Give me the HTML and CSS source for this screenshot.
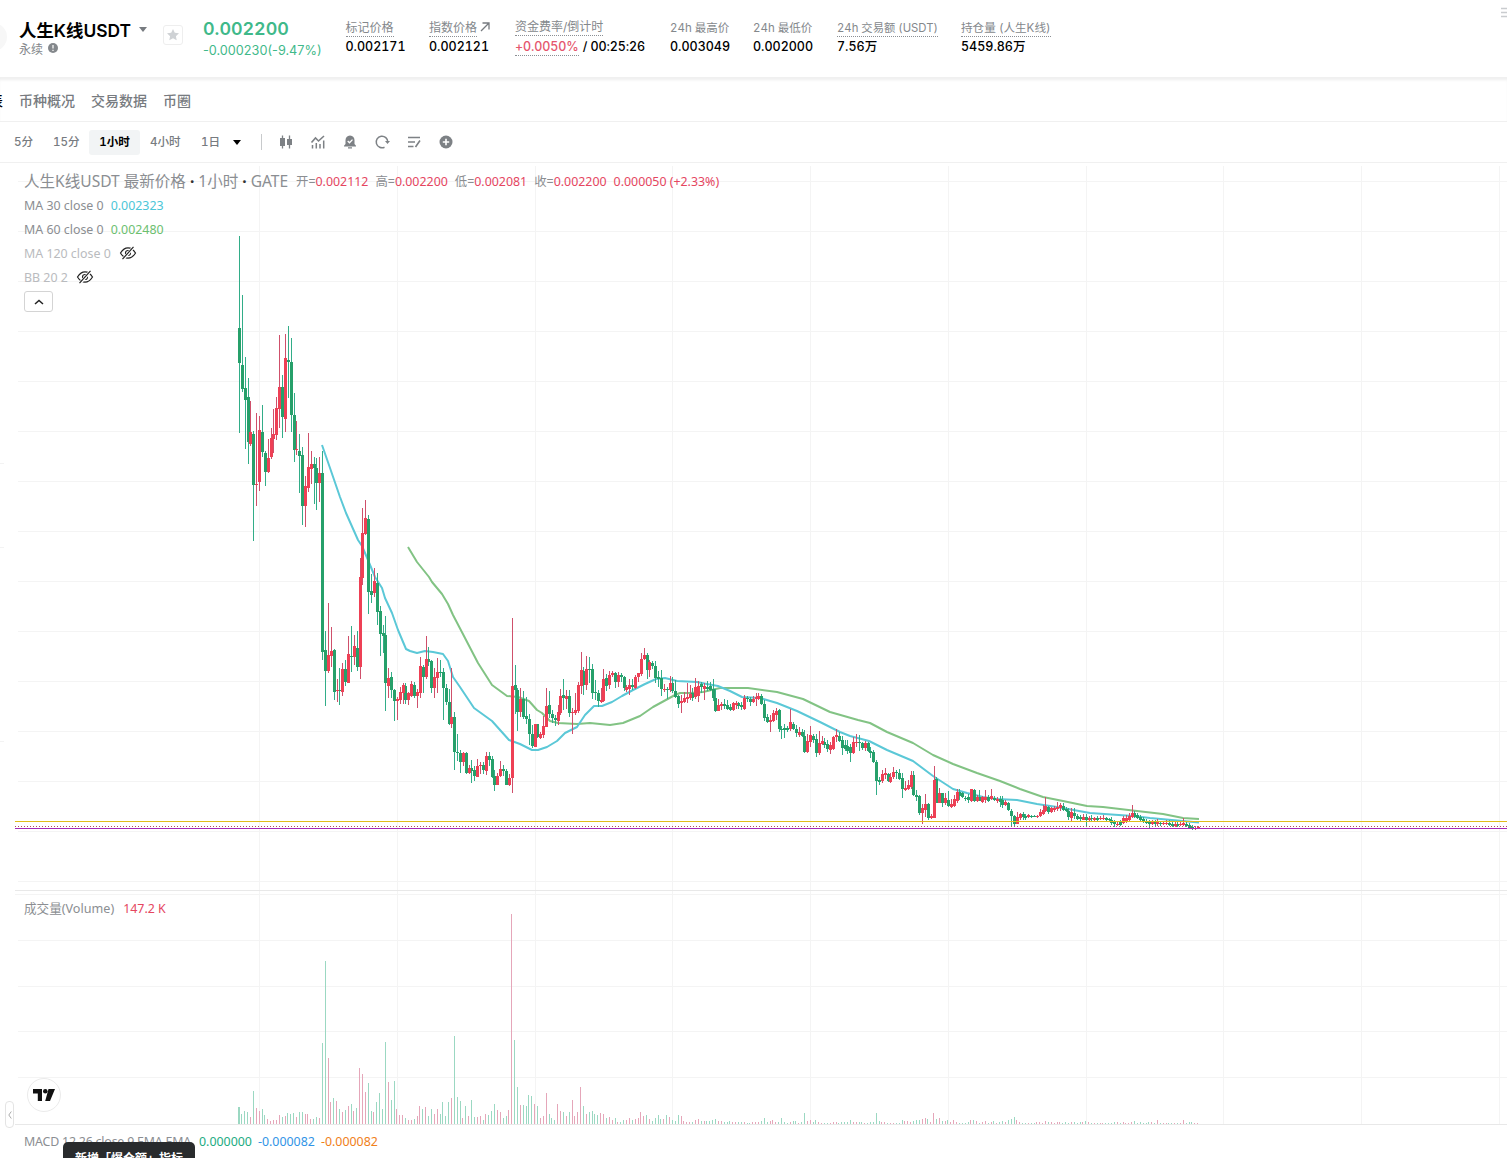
FILE: index.html
```html
<!DOCTYPE html>
<html lang="zh-CN">
<head>
	<meta charset="UTF-8">
	<title>人生K线USDT 永续</title>
	<link rel="stylesheet" href="styles.css">
</head>
<body>
	<div class="header">
		<i class="coin"></i>
		<div class="pair">
			<div class="pair-name">人生K线USDT<i class="caret"></i></div>
			<div class="pair-type">永续
				<svg width="10" height="10" viewBox="0 0 10 10"><circle cx="5" cy="5" r="5" fill="#84888c"/><path d="M5 2v3.6M5 6.8v1.3" stroke="#fff" stroke-width="1.2"/></svg>
			</div>
		</div>
		<div class="star">
			<svg width="14" height="14" viewBox="0 0 14 14"><path d="M7 1l1.8 3.8 4.2.5-3.1 2.9.8 4.1L7 10.3l-3.7 2 .8-4.1L1 5.300l4.200-.5z" fill="#cfd2d5"/></svg>
		</div>
		<div class="price">
			<strong>0.002200</strong>
			<span>-0.000230(-9.47%)</span>
		</div>
		<dl class="stat s1"><dt><u>标记价格</u></dt><dd>0.002171</dd></dl>
		<dl class="stat s2"><dt><u>指数价格</u><svg class="arrow" width="10" height="10" viewBox="0 0 10 10"><path d="M1 9L9 1M2.500 1H9v6.500" fill="none" stroke="#777b80" stroke-width="1.3"/></svg></dt><dd>0.002121</dd></dl>
		<dl class="stat s3"><dt><u>资金费率/倒计时</u></dt><dd><u class="red">+0.0050%</u><span> / 00:25:26</span></dd></dl>
		<dl class="stat s4"><dt>24h 最高价</dt><dd>0.003049</dd></dl>
		<dl class="stat s5"><dt>24h 最低价</dt><dd>0.002000</dd></dl>
		<dl class="stat s6"><dt><u>24h 交易额 (USDT)</u></dt><dd>7.56万</dd></dl>
		<dl class="stat s7"><dt><u>持仓量 (人生K线)</u></dt><dd>5459.86万</dd></dl>
		<svg class="menu" width="6" height="12" viewBox="0 0 6 12"><path d="M0 1.500h6M0 5.500h6M0 9.500h6" stroke="#c9cccf" stroke-width="1.500"/></svg>
	</div>

	<div class="tabs">
		<a class="active">表</a>
		<a>币种概况</a>
		<a>交易数据</a>
		<a>币圈</a>
	</div>

	<div class="toolbar">
		<a class="t1">5分</a>
		<a class="t2">15分</a>
		<a class="t3 active">1小时</a>
		<a class="t4">4小时</a>
		<a class="t5">1日</a>
		<i class="caret black"></i>
		<i class="line"></i>
		<div class="icons">
			<svg width="16" height="16" viewBox="0 0 16 16"><path d="M4.500 1.500v13M11.500 1.500v13" stroke="#7d8185" stroke-width="1.300"/><path d="M2 4h5v8H2zM9 5h5v6H9z" fill="#7d8185"/></svg>
			<svg width="16" height="16" viewBox="0 0 16 16"><path d="M1.500 8.500L5.500 4l3 3L14 2" fill="none" stroke="#7d8185" stroke-width="1.600"/><path d="M2.500 11v3.500M6.300 9v5.500M10 10v4.500M13.700 6.500v8" stroke="#7d8185" stroke-width="1.500"/></svg>
			<svg width="16" height="16" viewBox="0 0 16 16"><path d="M8 1.500c3 0 4.500 2.200 4.500 4.700V10l1.500 1.800v.8H2v-.8L3.500 10V6.200C3.500 3.700 5 1.500 8 1.500zM6 13.300h4v1.300H6z" fill="#7d8185"/><path d="M5.700 7l1.800 1.800 3-3.200" fill="none" stroke="#fff" stroke-width="1.300"/></svg>
			<svg width="16" height="16" viewBox="0 0 16 16"><path d="M10.500 13.200A5.800 5.800 0 1 1 13.800 8" fill="none" stroke="#7d8185" stroke-width="1.500"/><path d="M11 7h5l-2.500 3z" fill="#7d8185"/></svg>
			<svg width="16" height="16" viewBox="0 0 16 16"><path d="M2 3.500h12M2 8h7M2 12.500h5.500M14 6.500l-4.500 6.500" fill="none" stroke="#7d8185" stroke-width="1.600"/></svg>
			<svg width="16" height="16" viewBox="0 0 16 16"><circle cx="8" cy="8" r="6.500" fill="#7d8185"/><path d="M8 4.800v6.400M4.800 8h6.400" stroke="#fff" stroke-width="1.600"/></svg>
		</div>
	</div>

	<div class="chart">
		<svg id="chart" width="1507" height="995" viewBox="0 163 1507 995"></svg>

		<div class="legend">
			<div class="title">
				<span class="name">人生K线USDT 最新价格<b>·</b>1小时<b>·</b>GATE</span>
				<span class="o1">开=<em>0.002112</em></span>
				<span class="o2">高=<em>0.002200</em></span>
				<span class="o3">低=<em>0.002081</em></span>
				<span class="o4">收=<em>0.002200</em></span>
				<em>0.000050 (+2.33%)</em>
			</div>
			<div class="row">MA 30 close 0 <span class="cyan">0.002323</span></div>
			<div class="row">MA 60 close 0 <span class="green">0.002480</span></div>
			<div class="row off">MA 120 close 0
				<svg width="18" height="14" viewBox="0 0 18 14"><path d="M1.500 7C4 3 6.500 1.800 9 1.800S14 3 16.500 7C14 11 11.500 12.200 9 12.200S4 11 1.500 7z" fill="none" stroke="#222" stroke-width="1.200"/><circle cx="9" cy="7" r="2.500" fill="none" stroke="#222" stroke-width="1.200"/><path d="M3.800 13.500L14.800 .8" stroke="#fff" stroke-width="3"/><path d="M3.500 13.200L14.500 .8" stroke="#222" stroke-width="1.200"/></svg>
			</div>
			<div class="row off">BB 20 2
				<svg width="18" height="14" viewBox="0 0 18 14"><path d="M1.500 7C4 3 6.500 1.800 9 1.800S14 3 16.500 7C14 11 11.500 12.200 9 12.200S4 11 1.500 7z" fill="none" stroke="#222" stroke-width="1.200"/><circle cx="9" cy="7" r="2.500" fill="none" stroke="#222" stroke-width="1.200"/><path d="M3.800 13.500L14.800 .8" stroke="#fff" stroke-width="3"/><path d="M3.500 13.200L14.500 .8" stroke="#222" stroke-width="1.200"/></svg>
			</div>
			<div class="fold"><svg width="10" height="6" viewBox="0 0 10 6"><path d="M1 5l4-3.500L9 5" fill="none" stroke="#222" stroke-width="1.500"/></svg></div>
		</div>

		<div class="volume">成交量(Volume)<em>147.2 K</em></div>
		<div class="macd">MACD 12 26 close 9 EMA EMA<span class="m1">0.000000</span><span class="m2">-0.000082</span><span class="m3">-0.000082</span></div>

		<div class="tv"><svg width="22" height="12" viewBox="0 0 22 12"><path d="M0 0h9v12H4.800V4.600H0zM15.500 0H22l-5 12h-4.800z" fill="#111"/><circle cx="12.300" cy="2.300" r="2.300" fill="#111"/></svg></div>
		<div class="handle"><svg width="4" height="8" viewBox="0 0 4 8"><path d="M3.300 .5L.8 4l2.500 3.500" fill="none" stroke="#aaa"/></svg></div>
		<div class="tip">新增「爆仓额」指标</div>
	</div>
	<script src="chart.js"></script>
</body>
</html>
```
FILE: styles.css
```css
body { margin:0;width:1507px;height:1158px;overflow:hidden;background:#fff;color:#000;font-size:12px;font-family:Inter,"Noto Sans CJK SC",sans-serif; }
dl,dd { margin:0; }
i,em { font-style:normal; }
u { text-decoration:none;border-bottom:1px dotted #8b8f94; }

.header { position:relative;display:flex;height:78px;box-sizing:border-box;overflow:hidden;border-bottom:1px solid #f0f0f0;font-variant-numeric:tabular-nums; }
.coin { width:28px;height:28px;margin:23px 12px 0 -21px;border-radius:50%;background:#f7f7f7; }
.pair { width:144px; }
.pair-name { display:flex;align-items:center;height:24px;margin-top:17px;font-size:17.400px;font-weight:600;white-space:nowrap; }
.caret { border:4.500px solid transparent;border-top:5px solid #777b80;border-bottom:0;margin-left:8px; }
.pair-type { display:flex;align-items:center;gap:5px;height:14px;color:#84888c;font-size:12px; }
.star { display:flex;align-items:center;justify-content:center;width:18px;height:18px;margin-top:25px;border:1px solid #eee;border-radius:3px; }
.price { width:142.500px;margin-left:20px;color:#3fb98a; }
.price strong { display:block;height:24px;margin-top:17px;line-height:24px;font-size:17.900px;font-weight:600; }
.price span { display:block;height:20px;line-height:20px;font-size:12.700px;font-variant-numeric:normal; }

.stat { margin:19px 24px 0 0;white-space:nowrap; }
.stat dt { height:18px;line-height:18px;color:#84888c; }
.stat dt u { display:inline-block;height:17px; }
.stat dd { height:20px;line-height:19px;font-size:12.500px;font-weight:500; }
.stat dd u { display:inline-block;height:18px;line-height:19px; }
.s1 { width:59.500px; }
.s2 { width:62px; }
.s3 { width:131px;margin-top:18px; }
.s3 dd { margin-top:1px;letter-spacing:-.100px; }
.s3 dd span { margin-left:1px; }
.s4 { width:59px; }
.s5 { width:60px; }
.s6 { width:100px; }
.s4 dt,.s5 dt { font-size:11.500px; }
.s6 dt { font-size:11.300px; }
.s7 dt { font-size:11.600px; }
.arrow { margin-left:3px; }
.red { color:#e5566d; }
.menu { position:absolute;right:0;top:7px; }

.tabs { display:flex;height:43px;border-bottom:1px solid #f0f0f0;box-shadow:inset 0 3px 3px -1px #efefef; }
.tabs a { margin-right:16px;line-height:45px;font-size:14px;font-weight:500;color:#777b80; }
.tabs .active { width:14px;margin-left:-11px;color:#000; }

.toolbar { display:flex;align-items:center;height:40px;border-bottom:1px solid #f0f0f0;color:#777b80; }
.toolbar a { font-size:11.600px;font-weight:500;white-space:nowrap;font-variant-numeric:tabular-nums;line-height:24px; }
.t1 { width:39px;margin-left:14px; }
.t2 { width:36px; }
.toolbar .active { width:51px;height:25px;line-height:24px;border-radius:3px;background:#f2f4f5;color:#000;font-weight:600;text-align:center; }
.t4 { width:51px;margin-left:10px; }
.t5 { width:22px; }
.caret.black { margin-left:10px;border-top-color:#000; }
.line { width:1px;height:16px;margin-left:20px;background:#c8cacc; }
.icons { display:flex;gap:16px;margin-left:16px; }

.chart { position:relative;height:995px;overflow:hidden;color:#8b8e92;font-family:"Noto Sans","Noto Sans CJK SC",sans-serif;font-size:12.400px; }
.chart svg { display:block; }
.chart em { color:#e5465f; }
#chart { shape-rendering:crispEdges; }
.grid { stroke:#f4f4f4;fill:none; }
.pane { stroke:#e8e8e8;fill:none; }
.wick.up { stroke:#cf506b;fill:none; }
.wick.down { stroke:#32ad88;fill:none; }
.body.up { fill:#ee4055; }
.body.down { fill:#26a06a; }
.vol.up { fill:#e5a6b9; }
.vol.down { fill:#9bd8c2; }
.ma { fill:none;stroke-width:2;stroke-linejoin:round;shape-rendering:auto; }
.ma30 { stroke:#5bc8d7; }
.ma60 { stroke:#82c384; }
.price-line { fill:none;stroke-width:1; }
.price-line.mark { stroke:#e0bc1a; }
.price-line.last { stroke:#b0505c;stroke-dasharray:1 2; }
.price-line.index { stroke:#a42ab5; }

.legend { position:absolute;left:24px;top:6px; }
.title { display:flex;align-items:center;height:24px;white-space:nowrap;font-size:12.400px; }
.title .name { width:272px;margin-top:-2px;font-size:15.550px; }
.title b { margin:0 4px;color:#333; }
.title .o1,.title .o2,.title .o3,.title .o4 { width:79.400px; }
.row { display:flex;align-items:center;height:24px;font-size:12.400px;white-space:nowrap; }
.row span { margin-left:7px; }
.row svg { margin-left:8px; }
.row.off { color:#b9bbbe; }
.cyan { color:#4cc6d8; }
.green { color:#6cc070; }
.fold { display:flex;align-items:center;justify-content:center;width:27px;height:19px;margin-top:2px;border:1px solid #d4d4d4;border-radius:3px;background:#fff; }
.volume { position:absolute;left:24px;top:736px;line-height:20px;font-size:12.600px; }
.volume em { margin-left:9px;font-size:12.400px; }
.macd { position:absolute;left:24px;top:969px;line-height:20px;white-space:nowrap;letter-spacing:-.200px; }
.macd span { margin-left:8px;letter-spacing:0; }
.macd .m2,.macd .m3 { margin-left:6px; }
.m1 { color:#22ab82; }
.m2 { color:#3194e6; }
.m3 { color:#f08019; }
.tv { position:absolute;left:27px;top:915px;display:flex;align-items:center;justify-content:center;width:32px;height:32px;border:1px solid #ebebeb;border-radius:50%;background:#fff; }
.handle { position:absolute;left:5px;top:938px;display:flex;align-items:center;justify-content:center;width:7px;height:25px;border:1px solid #e4e4e4;border-radius:4px; }
.tip { position:absolute;left:63px;top:979px;width:132px;height:30px;line-height:33px;border-radius:5px;background:#292b2d;color:#fff;font-size:12px;font-weight:600;text-align:center; }
```
FILE: chart.js
```js
var STEP = 2.87, START = 239.5, VOL_START = 239.1, BASE = 1124;

// 最高 实体上 实体下 最低 方向
var candles = ('236 328 363 433 g,295 365 389 392 g,357 388 400 449 g,378 397 442 464 g,401 432 444 446 r,431 434 485 541 g,413 484 485 506 r,416 430 482 491 r,405 432 452 457 g,451 453 472 486 g,' +
	'439 458 472 473 r,428 438 457 459 r,409 434 439 453 r,397 408 435 440 r,335 387 409 428 r,375 387 417 438 g,334 358 419 432 r,326 360 362 398 g,338 362 415 432 g,393 415 450 462 g,' +
	'421 449 450 455 r,434 451 456 493 g,447 455 506 525 g,476 486 506 527 r,433 467 488 492 r,451 464 469 484 r,457 464 468 504 g,458 468 483 510 g,457 473 483 502 r,451 473 652 660 g,' +
	'631 650 671 706 g,603 655 671 673 r,627 651 656 667 r,649 650 692 700 g,679 690 691 702 r,668 690 691 705 g,663 669 692 696 r,660 669 682 686 g,636 654 683 683 r,626 656 657 672 g,' +
	'635 646 657 665 r,631 648 667 671 g,558 577 667 679 r,508 533 578 585 r,500 518 534 535 r,515 519 592 614 g,574 591 595 603 g,568 581 593 597 r,573 583 612 625 g,606 611 634 656 g,' +
	'625 633 636 653 g,616 635 683 711 g,668 678 686 698 r,672 677 690 698 g,689 690 701 721 g,697 699 701 720 r,687 692 700 704 r,683 685 693 704 r,683 686 700 704 g,692 693 700 705 r,' +
	'681 684 696 697 r,682 685 696 698 g,689 692 696 708 r,657 666 693 698 r,665 667 677 693 g,636 659 677 679 r,647 659 662 666 g,660 661 688 693 g,668 677 688 698 r,658 672 678 693 r,' +
	'660 672 673 677 g,668 672 688 720 g,684 688 702 705 g,689 702 724 725 g,668 717 724 728 r,712 717 752 770 g,734 752 753 761 g,750 753 762 773 g,752 753 762 766 r,752 753 773 774 g,' +
	'765 768 773 774 r,760 768 771 783 g,766 770 776 781 g,759 766 777 777 r,762 765 766 774 r,762 765 770 774 g,752 756 771 775 r,752 756 760 766 g,756 759 777 778 g,770 776 785 791 g,' +
	'773 776 785 785 r,761 769 776 777 r,765 769 771 776 g,769 771 785 785 g,774 778 785 786 r,618 686 778 793 r,665 685 690 714 g,688 690 712 731 g,688 699 712 717 r,691 699 717 719 g,' +
	'697 716 719 724 g,714 719 734 745 g,725 734 746 748 g,724 724 747 747 r,724 724 737 738 g,732 734 738 739 r,716 726 735 738 r,688 706 727 727 r,691 705 714 718 g,710 714 718 723 g,' +
	'715 718 720 726 g,705 712 721 725 r,689 696 713 715 r,679 695 698 710 g,690 696 699 709 r,690 696 713 717 g,708 712 713 734 r,693 710 713 715 r,682 685 711 713 r,652 670 686 694 r,' +
	'667 671 685 695 g,656 669 685 690 r,657 669 670 683 g,664 669 693 699 g,680 692 693 700 g,690 693 701 707 g,688 700 702 703 r,669 679 701 702 r,674 678 686 691 g,671 675 685 689 r,' +
	'671 673 675 677 r,672 673 682 688 g,672 675 682 687 r,673 675 677 682 g,676 677 688 691 g,685 687 690 692 r,679 685 689 695 r,679 685 687 690 g,675 677 688 689 r,673 673 677 682 r,' +
	'653 659 674 676 r,648 655 659 660 r,653 655 670 679 g,660 662 670 677 r,661 663 666 669 g,661 666 678 683 g,671 677 679 687 g,670 678 689 696 g,684 689 690 692 r,687 689 690 699 g,' +
	'676 683 690 692 r,677 683 691 693 g,680 691 697 698 g,695 696 704 708 g,695 701 703 713 r,692 698 702 703 r,683 697 699 703 r,685 694 698 700 r,688 693 698 701 g,678 687 697 699 r,' +
	'681 686 696 702 r,682 684 687 693 g,683 686 689 700 r,681 687 689 691 g,682 686 690 691 g,679 689 698 701 g,689 698 711 712 g,699 705 711 711 r,702 704 706 710 r,699 704 706 709 g,' +
	'700 705 709 710 g,704 707 710 711 g,702 703 710 711 r,701 703 705 709 r,702 703 706 709 g,702 705 707 710 g,695 698 709 710 r,696 698 699 702 g,697 699 702 706 g,696 699 702 703 r,' +
	'693 697 699 706 r,693 696 699 700 r,694 696 704 705 g,700 704 718 721 g,714 717 722 723 g,715 720 722 732 r,710 713 721 722 r,708 711 715 720 r,709 710 729 732 g,726 729 730 739 g,' +
	'724 728 730 738 g,726 728 730 732 g,709 722 729 731 r,722 724 729 730 g,725 729 733 737 g,727 732 735 737 r,729 732 736 737 g,730 736 752 753 g,734 741 752 753 r,726 735 742 747 r,' +
	'734 736 740 743 g,734 739 753 757 g,731 743 753 755 r,736 741 744 745 r,738 742 745 748 g,740 744 749 752 g,742 745 750 754 r,736 737 749 750 r,729 735 737 742 r,732 736 741 742 g,' +
	'736 740 748 755 g,740 745 749 751 g,740 746 751 754 g,744 747 753 762 g,737 742 753 754 r,734 742 743 747 r,735 742 743 751 g,742 743 748 750 g,741 743 748 751 r,742 743 751 752 g,' +
	'747 751 753 758 g,750 752 762 763 g,760 762 781 795 g,777 780 782 785 g,770 774 781 783 r,768 773 775 779 r,773 774 781 782 g,773 777 782 783 r,767 772 777 779 r,770 772 773 779 g,' +
	'769 773 779 780 g,773 778 789 798 g,781 788 790 791 r,780 785 789 790 r,771 775 787 789 r,771 775 795 796 g,790 795 797 801 g,795 796 813 815 g,804 808 813 824 r,794 804 810 817 r,' +
	'803 804 818 820 g,814 816 818 819 r,766 780 818 818 r,777 779 803 803 g,788 793 803 803 r,793 793 803 807 g,793 798 803 805 r,791 800 806 807 g,799 804 807 808 r,795 799 806 807 r,' +
	'789 792 801 803 r,789 792 796 800 g,792 793 797 798 g,796 798 799 801 g,794 797 800 803 g,789 789 801 802 r,789 790 801 802 g,795 797 801 802 r,790 797 801 801 g,796 797 802 803 r,' +
	'790 797 800 803 r,795 797 801 802 g,789 796 799 800 r,796 798 800 801 g,797 799 801 803 r,796 799 802 807 g,796 800 805 808 g,800 802 805 806 r,802 803 810 811 g,809 811 816 826 g,' +
	'815 816 824 827 g,812 817 824 824 r,813 814 818 820 r,812 814 817 820 g,814 816 818 820 g,814 815 817 818 r,815 816 817 818 g,815 816 817 817 g,815 816 817 818 r,809 812 816 817 r,' +
	'805 810 814 815 r,797 806 811 812 r,806 807 812 814 g,807 808 812 813 r,806 808 810 812 r,802 807 809 811 r,803 805 808 811 r,803 806 810 811 g,807 809 811 812 g,808 811 817 820 g,' +
	'808 812 818 821 r,808 813 816 819 g,814 816 819 820 g,815 817 819 821 g,814 817 820 820 r,814 817 820 826 g,816 818 820 821 r,815 818 819 822 g,817 818 820 822 r,816 818 820 821 g,' +
	'816 818 819 820 r,815 818 819 820 r,817 818 820 821 g,818 819 820 821 g,817 820 823 825 g,820 821 824 827 g,822 824 825 826 r,820 822 825 826 g,816 818 823 824 r,815 818 822 823 r,' +
	'813 816 820 821 r,805 813 817 818 r,811 813 817 818 g,813 815 818 819 g,815 817 820 822 g,817 819 822 823 g,819 821 823 824 g,820 822 824 828 g,820 822 824 825 r,820 822 824 826 g,' +
	'819 822 824 826 r,821 823 824 826 g,821 823 824 825 r,820 823 824 825 r,820 823 825 826 g,821 824 826 827 g,822 824 826 827 r,822 824 826 827 g,821 824 825 826 r,818 823 825 826 r,' +
	'822 824 826 827 g,823 825 828 829 g,825 827 829 830 g,826 828 829 830 r,826 827 829 829 r').split(',');

var volumes = [17,10,13,12,7,33,16,13,15,9,5,3,4,4,9,7,8,11,10,11,7,12,12,10,10,5,5,7,6,81,
	163,66,22,26,23,15,12,14,18,20,13,16,56,50,32,41,13,12,22,31,15,82,42,24,43,15,9,9,6,4,
	4,5,8,18,15,17,8,15,10,15,10,22,8,22,26,88,27,23,6,18,8,24,7,7,8,4,10,9,13,20,
	14,12,6,8,14,210,84,37,19,19,18,29,28,20,18,6,8,31,10,6,4,20,13,12,8,12,24,8,12,37,
	18,10,12,13,10,9,11,10,6,7,4,6,2,2,4,4,6,4,5,6,12,8,9,5,3,6,9,5,5,9,
	7,4,3,9,8,3,2,2,2,4,5,3,3,3,3,4,5,3,3,2,2,3,2,2,2,2,2,1,1,2,
	2,2,3,6,2,3,4,2,2,6,2,1,2,3,3,1,2,11,3,4,2,4,2,1,1,1,1,2,2,1,
	2,2,2,4,2,2,2,2,1,1,2,2,11,3,2,2,1,1,1,1,1,4,3,3,2,3,4,4,5,6,
	5,2,11,5,6,3,3,4,2,4,2,1,1,1,2,4,4,3,1,2,3,1,2,3,1,2,3,2,4,5,
	7,4,2,1,1,1,1,1,2,2,1,3,2,2,1,2,2,1,2,1,2,2,1,2,2,3,2,1,1,1,
	1,1,1,1,1,2,2,1,2,1,1,2,3,1,2,1,1,2,2,1,4,1,1,1,1,1,1,1,1,4,1,2,2,1,1];

var ma30 = '322,445 330,468 340,497 346,513 358,540 362,546 368,560 375,577 382,588 385,598 392,613 398,630 406,649 410,651 417,653 425,651 433,652 443,654 448,661 453,677 460,687 474,708 492,721 509,740 520,744 532,750 538,750 547,747 557,741 565,733 577,727 585,715 594,706 602,706 612,702 622,696 633,690 645,684 656,679 665,678 677,681 697,682 707,684 718,686 730,691 742,697 760,698 777,703 797,711 820,722 840,732 850,736 869,741 887,750 913,761 933,776 953,789 967,793 983,797 997,799 1017,800 1037,804 1057,807 1090,813 1133,816 1150,818 1199,822.500';
var ma60 = '408,547 417,562 429,577 432,582 442,594 448,604 453,615 465,638 478,663 492,685 507,696 518,697 529,701 537,710 542,713 550,721 558,723 577,724 590,723 610,725 623,723 640,716 653,707 675,695 680,693 690,693 703,692 720,688 748,688 777,692 803,699 830,712 858,720 870,723 887,732 913,743 933,755 953,764 977,773 1000,781 1020,789 1043,797 1063,801 1087,806 1103,807 1137,811 1163,814 1183,818 1199,819';

var oChart = document.getElementById('chart');

function add(tag, cls, attrs) {
	var el = document.createElementNS('http://www.w3.org/2000/svg', tag);
	el.setAttribute('class', cls);
	for ( var k in attrs ) el.setAttribute(k, attrs[k]);
	oChart.appendChild(el);
}

// 网格
var d = '';
for ( var y=181.5;y<890;y+=50 ) d += 'M18 ' + y + 'H1507';
[940.5, 986.5, 1031.5, 1077.5].forEach(function (y) { d += 'M18 ' + y + 'H1507'; });
[259.5, 397.5, 535.5, 672.5, 810.5, 948.5, 1086.5, 1223.5, 1361.5, 1499.5].forEach(function (x) {
	d += 'M' + x + ' 166V1124';
});
add('path', 'grid', { d: d });
add('path', 'pane', { d: 'M15 890.5H1507M15 1124.5H1507' });
add('path', 'grid', { d: 'M15 894.5H1507' });
add('path', 'pane', { d: 'M0 463.5H4M0 547.5H4M0 741.5H4', opacity: .5 });

// K线和成交量
var wick = { r: '', g: '' }, body = { r: '', g: '' }, vol = { r: '', g: '' };
for ( var i=0;i<candles.length;i++ ) {
	var c = candles[i].split(' ');
	var x = Math.floor(START + i * STEP);
	var vx = Math.floor(VOL_START + i * STEP);
	wick[c[4]] += 'M' + (x + .5) + ' ' + c[0] + 'V' + c[3];
	body[c[4]] += 'M' + (x - 1) + ' ' + c[1] + 'h3V' + Math.max(c[2], +c[1] + 1) + 'h-3z';
	vol[c[4]] += 'M' + vx + ' ' + BASE + 'v-' + volumes[i] + 'h1v' + volumes[i] + 'z';
}
vol.g += 'M238 1124v-17h1v17z';
add('path', 'vol down', { d: vol.g });
add('path', 'vol up', { d: vol.r });
add('polyline', 'ma ma60', { points: ma60 });
add('polyline', 'ma ma30', { points: ma30 });
add('path', 'wick down', { d: wick.g });
add('path', 'wick up', { d: wick.r });
add('path', 'body down', { d: body.g });
add('path', 'body up', { d: body.r });

// 价格线
add('path', 'price-line mark', { d: 'M15 821.5H1507' });
add('path', 'price-line last', { d: 'M15 826.5H1507' });
add('path', 'price-line index', { d: 'M15 828.5H1507' });
```
